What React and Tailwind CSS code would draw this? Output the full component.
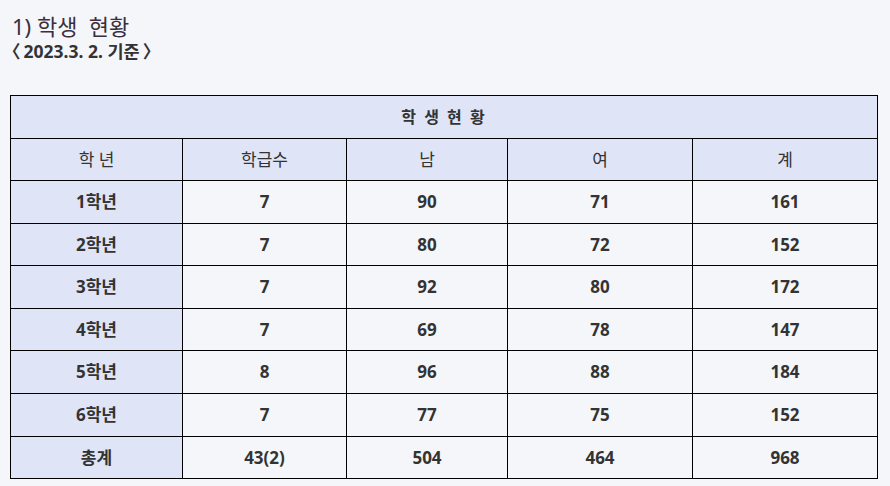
const ROWS = [
  ['1학년', '7', '90', '71', '161'],
  ['2학년', '7', '80', '72', '152'],
  ['3학년', '7', '92', '80', '172'],
  ['4학년', '7', '69', '78', '147'],
  ['5학년', '8', '96', '88', '184'],
  ['6학년', '7', '77', '75', '152'],
  ['총계', '43(2)', '504', '464', '968'],
];

const HEADS = ['학 년', '학급수', '남', '여', '계'];

export default function App() {
  return (
    <div
      className="min-h-[486px] bg-[#f5f6fa] pl-[10px] pr-[12px] pt-[12px] text-[#333]"
      style={{ fontFamily: '"Noto Sans", "Noto Sans CJK KR", sans-serif' }}
    >
      <h2 className="pl-[2px] text-[22px] leading-[29px] text-[#3a2f3c]">1) 학생&nbsp; 현황</h2>
      <p className="text-[17.5px] font-bold leading-[20px] text-[#333]">
        <span className="-ml-[7px] mr-[3px]">〈</span>2023.3. 2. 기준<span className="ml-[3px]">〉</span>
      </p>

      <table className="mt-[34px] w-[868px] table-fixed border-collapse border border-black text-center">
        <colgroup>
          <col className="w-[172px]" />
          <col className="w-[164px]" />
          <col className="w-[161px]" />
          <col className="w-[185px]" />
          <col className="w-[185px]" />
        </colgroup>
        <thead>
          <tr className="h-[43px] bg-[#dfe4f7]">
            <th colSpan={5} className="border border-black text-[16px] font-bold tracking-[2px]">
              학 생 현 황
            </th>
          </tr>
          <tr className="h-[42px] bg-[#dfe4f7]">
            {HEADS.map((h) => (
              <th key={h} className="border border-black text-[17px] font-normal">
                {h}
              </th>
            ))}
          </tr>
        </thead>
        <tbody>
          {ROWS.map((r) => (
            <tr key={r[0]} className="h-[42.6px]">
              {r.map((c, i) => (
                <td
                  key={i}
                  className={
                    i === 0
                      ? 'border border-black bg-[#dfe4f7] text-[17px] font-bold'
                      : 'border border-black bg-[#f5f6fa] text-[17px] font-bold'
                  }
                >
                  {c}
                </td>
              ))}
            </tr>
          ))}
        </tbody>
      </table>
    </div>
  );
}
